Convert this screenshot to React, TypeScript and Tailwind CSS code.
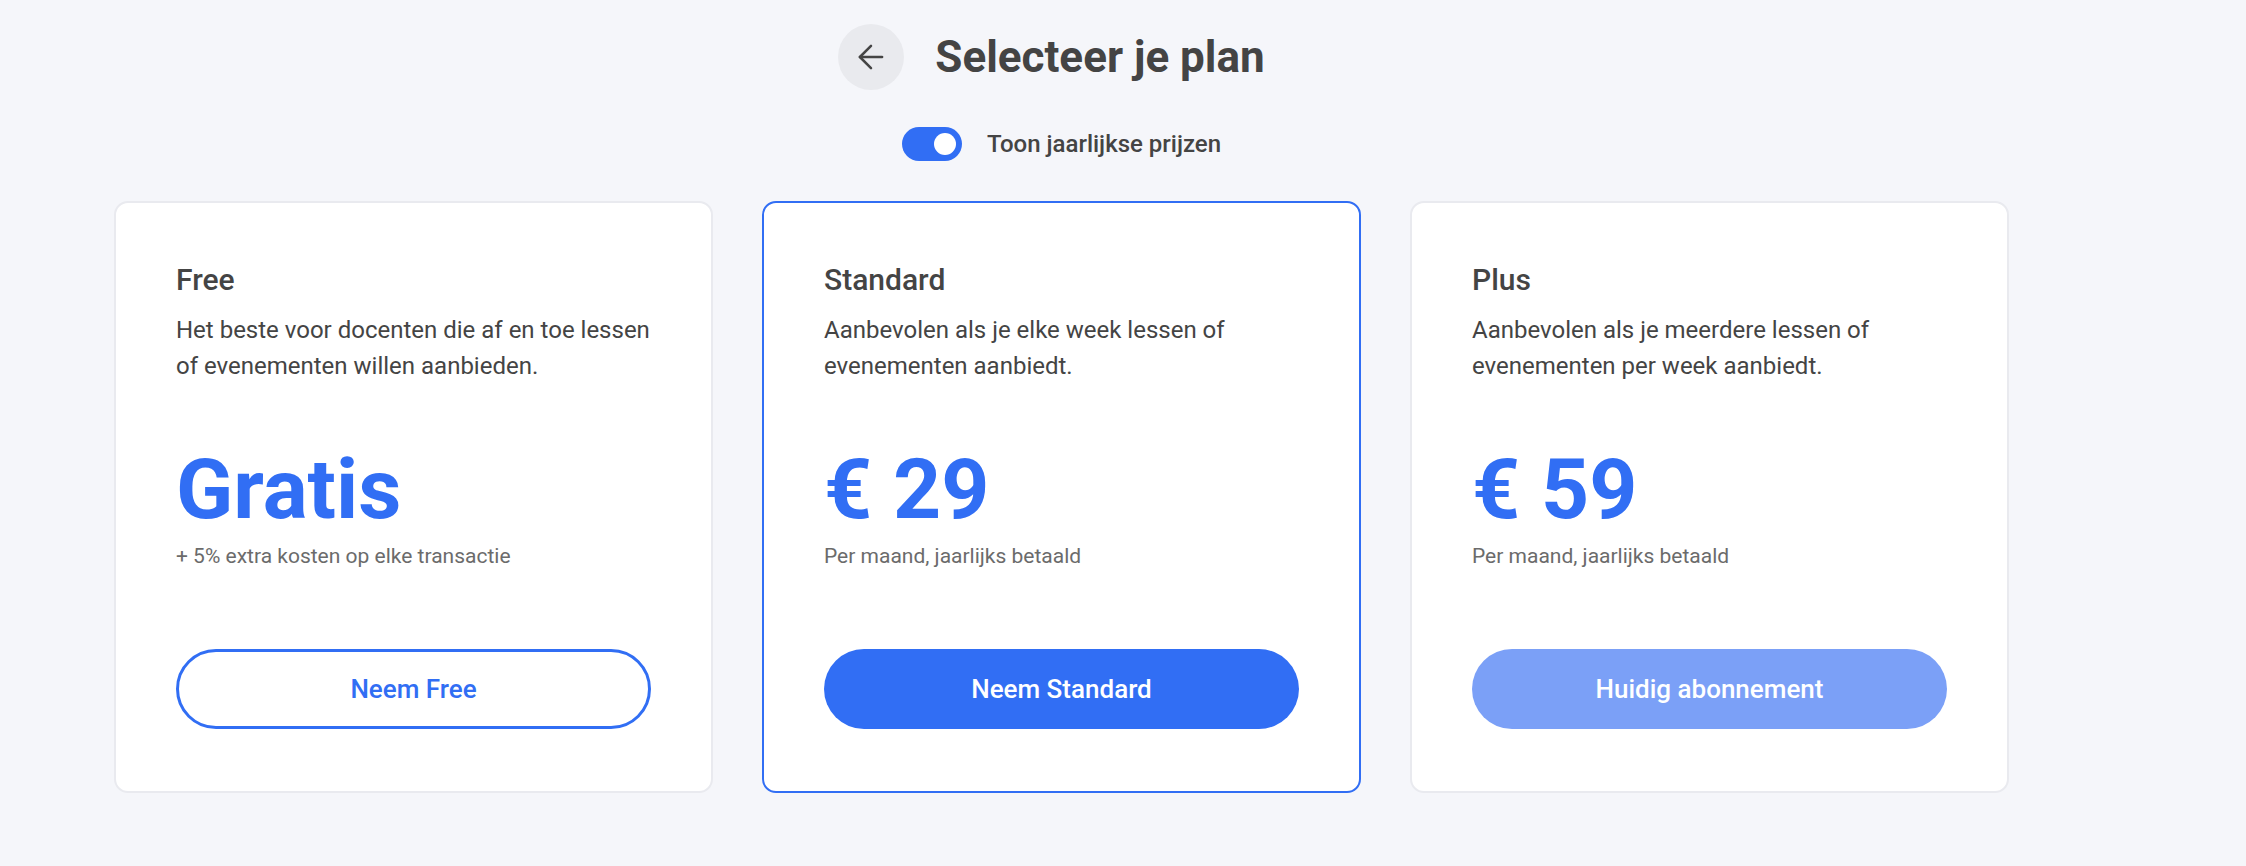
import React, { useState } from 'react'
import { ArrowLeft } from 'lucide-react'

type Plan = {
    name: string
    description: string
    price: string
    note: string
    button: string
    variant: 'outline' | 'solid' | 'current'
    highlighted?: boolean
}

const plans: Plan[] = [
    {
        name: 'Free',
        description: 'Het beste voor docenten die af en toe lessen of evenementen willen aanbieden.',
        price: 'Gratis',
        note: '+ 5% extra kosten op elke transactie',
        button: 'Neem Free',
        variant: 'outline',
    },
    {
        name: 'Standard',
        description: 'Aanbevolen als je elke week lessen of evenementen aanbiedt.',
        price: '€ 29',
        note: 'Per maand, jaarlijks betaald',
        button: 'Neem Standard',
        variant: 'solid',
        highlighted: true,
    },
    {
        name: 'Plus',
        description: 'Aanbevolen als je meerdere lessen of evenementen per week aanbiedt.',
        price: '€ 59',
        note: 'Per maand, jaarlijks betaald',
        button: 'Huidig abonnement',
        variant: 'current',
    },
]

const PlanCard = ({ plan }: { plan: Plan }) => {
    const buttonClass =
        plan.variant === 'outline'
            ? 'border-[3px] border-[#316ef4] text-[#316ef4] bg-white'
            : plan.variant === 'solid'
              ? 'bg-[#316ef4] text-white'
              : 'bg-[#7ba0f7] text-white'

    return (
        <div
            className={`w-[599px] h-[592px] rounded-[14px] bg-white border-2 flex flex-col px-[60px] pt-[59px] ${
                plan.highlighted ? 'border-[#316ef4]' : 'border-[#e9eaef]'
            }`}
        >
            <div className="text-[30px] leading-[36px] font-medium text-[#444]">{plan.name}</div>
            <p className="mt-[14px] text-[24px] leading-[36px] text-[#444]">{plan.description}</p>
            <div className="mt-[64px] text-[84px] leading-[84px] font-bold text-[#316ef4]">{plan.price}</div>
            <div className="mt-[10px] text-[21px] leading-[28px] text-[#6b6b6b]">{plan.note}</div>
            <button
                className={`mt-auto mb-[62px] h-[80px] w-full rounded-full text-[26px] font-medium ${buttonClass}`}
            >
                {plan.button}
            </button>
        </div>
    )
}

const App = () => {
    const [yearly, setYearly] = useState<boolean>(true)

    return (
        <div className="min-h-screen w-full bg-[#f5f6fa] font-['Roboto',sans-serif]">
            <div className="w-[1895px] ml-[114px] flex flex-col items-center">
                <div className="flex items-center gap-[31px] pt-[24px] pr-[20px]">
                    <button className="w-[66px] h-[66px] rounded-full bg-[#e9eaee] flex items-center justify-center text-[#444]">
                        <ArrowLeft size={38} strokeWidth={1.6} />
                    </button>
                    <h1 className="text-[44px] font-bold text-[#444]">Selecteer je plan</h1>
                </div>

                <div className="flex items-center gap-[25px] mt-[36px]">
                    <button
                        onClick={() => setYearly(!yearly)}
                        className={`w-[60px] h-[34px] rounded-full flex items-center px-[6px] ${
                            yearly ? 'bg-[#316ef4] justify-end' : 'bg-gray-300 justify-start'
                        }`}
                    >
                        <span className="w-[22px] h-[22px] rounded-full bg-white"></span>
                    </button>
                    <span className="text-[24px] font-medium text-[#444]">Toon jaarlijkse prijzen</span>
                </div>

                <div className="flex gap-[49px] mt-[39px]">
                    {plans.map((plan) => (
                        <PlanCard key={plan.name} plan={plan} />
                    ))}
                </div>
            </div>
        </div>
    )
}

export default App
